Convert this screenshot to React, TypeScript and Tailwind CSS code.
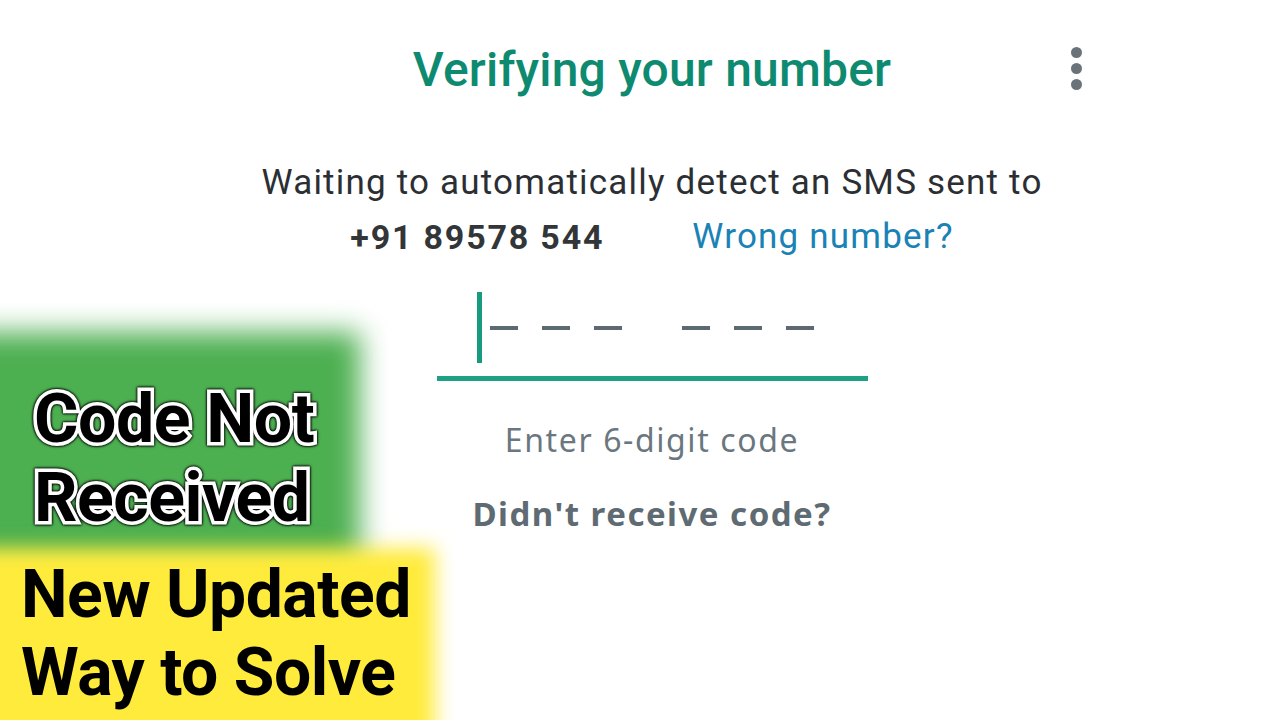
export default function App() {
    const dashes = [0, 1, 2];

    return (
        <div className="relative h-[720px] w-[1280px] overflow-hidden bg-white font-['Roboto','Liberation_Sans',sans-serif]">
            {/* Verification screen */}
            <div className="flex flex-col items-center pl-[24px] pt-[44px]">
                <h1 className="text-[48px] font-medium leading-[52px] tracking-[0.2px] text-[#0d8a70]">
                    Verifying your number
                </h1>

                <p className="mt-[67px] text-[35px] leading-[40px] tracking-[1.2px] text-[#2b2f33]">
                    Waiting to automatically detect an SMS sent to
                </p>
                <div className="mt-[14px] flex items-center gap-[88px] leading-[40px]">
                    <span className="text-[34px] font-bold tracking-[1.8px] text-[#333638]">+91 89578 544</span>
                    <span className="text-[35px] tracking-[1.2px] text-[#1a82b5]">Wrong number?</span>
                </div>

                {/* Code input */}
                <div className="mt-[35px] w-[431px] pr-[22px]">
                    <div className="flex h-[71px] items-center pl-[40px]">
                        <div className="h-[71px] w-[5px] bg-[#179b7e]" />
                        <div className="ml-[8px] flex gap-[24px]">
                            {dashes.map((d) => (
                                <div key={d} className="h-[4px] w-[28px] bg-[#5d6a72]" />
                            ))}
                        </div>
                        <div className="ml-[60px] flex gap-[24px]">
                            {dashes.map((d) => (
                                <div key={d} className="h-[4px] w-[28px] bg-[#5d6a72]" />
                            ))}
                        </div>
                    </div>
                    <div className="mt-[13px] h-[5px] w-[431px] bg-[#1da083]" />
                </div>

                <p className="mt-[39px] font-['Noto_Sans',sans-serif] text-[32px] leading-[40px] tracking-[1.6px] text-[#6b777f]">
                    Enter 6-digit code
                </p>
                <p className="mt-[34px] font-['Noto_Sans',sans-serif] text-[33px] font-bold leading-[40px] tracking-[1.5px] text-[#5f6b72]">
                    Didn't receive code?
                </p>
            </div>

            {/* Overflow menu */}
            <div className="absolute left-[1071px] top-[47px] flex flex-col gap-[5px]">
                <div className="h-[11px] w-[11px] rounded-full bg-[#6a737a]" />
                <div className="h-[11px] w-[11px] rounded-full bg-[#6a737a]" />
                <div className="h-[11px] w-[11px] rounded-full bg-[#6a737a]" />
            </div>

            {/* Thumbnail tags */}
            <div className="absolute left-[-40px] top-[332px] h-[240px] w-[400px] bg-[#4caf50] blur-[14px]" />
            <div className="absolute left-[-40px] top-[548px] h-[200px] w-[475px] bg-[#ffeb3b] blur-[10px]" />

            <div className="absolute left-[34px] top-[380px] text-[68px] font-bold leading-[79px] tracking-[-0.5px] text-black [-webkit-text-stroke:7px_white] [paint-order:stroke_fill] [filter:drop-shadow(0_0_1px_#000)_drop-shadow(0_0_1px_#000)]">
                <div>Code Not</div>
                <div>Received</div>
            </div>

            <div className="absolute left-[21px] top-[556px] text-[66px] font-bold leading-[78px] tracking-[-0.5px] text-black">
                <div>New Updated</div>
                <div>Way to Solve</div>
            </div>
        </div>
    );
}
